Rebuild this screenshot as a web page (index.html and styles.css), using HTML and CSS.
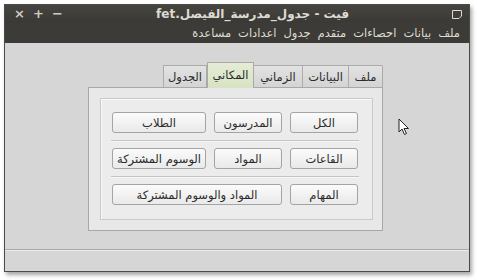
FILE: index.html
```html
<!DOCTYPE html>
<html lang="ar">

<head>
    <meta charset="UTF-8" />
    <title>fet</title>
    <link rel="stylesheet" href="styles.css">
</head>

<body>
    <div class="window">
        <div class="titlebar">
            <div class="win-buttons">
                <span class="wb">×</span>
                <span class="wb">+</span>
                <span class="wb">−</span>
            </div>
            <div class="title">فيت - جدول_مدرسة_الفيصل.fet</div>
            <svg class="menu-icon" width="10" height="9" viewBox="0 0 10 9">
                <path d="M0.5 0.5 H9.5 V6 L7 8.5 H0.5 Z" fill="none" stroke="#dfdbd2" stroke-width="1" />
            </svg>
        </div>
        <div class="menubar">
            <span>ملف</span>
            <span>بيانات</span>
            <span>احصاءات</span>
            <span>متقدم</span>
            <span>جدول</span>
            <span>اعدادات</span>
            <span>مساعدة</span>
        </div>

        <div class="content">
            <div class="tabwidget">
                <div class="tabbar">
                    <div class="tab t1">ملف</div>
                    <div class="tab t2">البيانات</div>
                    <div class="tab t3">الزماني</div>
                    <div class="tab t4 active">المكاني</div>
                    <div class="tab t5">الجدول</div>
                </div>
                <div class="pane">
                    <div class="frame">
                        <button class="btn">الكل</button>
                        <button class="btn">المدرسون</button>
                        <button class="btn">الطلاب</button>
                        <div class="sep"></div>
                        <button class="btn">القاعات</button>
                        <button class="btn">المواد</button>
                        <button class="btn">الوسوم المشتركة</button>
                        <div class="sep"></div>
                        <button class="btn">المهام</button>
                        <button class="btn wide">المواد والوسوم المشتركة</button>
                    </div>
                </div>
            </div>

            <!-- mouse pointer left in the shot -->
            <svg class="pointer" width="13" height="18" viewBox="0 0 13 18">
                <path d="M1 1 L1 14 L4 11 L6.5 16.5 L8.5 15.5 L6 10.5 L10.5 10.5 Z" fill="#fff" stroke="#222" stroke-width="1" stroke-linejoin="round" />
            </svg>
        </div>

        <div class="statusbar"></div>
    </div>
</body>

</html>
```

FILE: styles.css
```css
body {
    margin: 0;
    background: #ffffff;
    font-family: "DejaVu Sans", "Noto Sans", sans-serif;
    width: 477px;
    height: 280px;
    overflow: hidden;
}

.window {
    margin: 4px 0 0 4px;
    width: 464px;
    height: 266px;
    border: 1px solid #4a4a47;
    display: flex;
    flex-direction: column;
    background: #d6d6d6;
    box-shadow: 2px 3px 4px rgba(0, 0, 0, 0.35);
}

.titlebar {
    height: 18px;
    background: linear-gradient(#45443f, #3a3935);
    color: #dfdbd2;
    display: flex;
    align-items: center;
}

.win-buttons {
    display: flex;
    padding-left: 5px;
}

.wb {
    width: 19px;
    text-align: center;
    font-size: 13px;
    font-weight: bold;
    color: #cfcbc3;
    line-height: 18px;
}

.title {
    direction: rtl;
    font-size: 12px;
    font-weight: bold;
    margin-left: 107px;
    width: 175px;
    text-align: center;
    line-height: 18px;
    white-space: nowrap;
}

.menu-icon {
    margin-left: auto;
    margin-right: 7px;
}

.menubar {
    height: 20px;
    background: #3c3b37;
    color: #dfdbd2;
    direction: rtl;
    display: flex;
    align-items: center;
    gap: 7px;
    padding-right: 9px;
    font-size: 11.5px;
}

.content {
    flex: 1;
    position: relative;
    padding: 19px 0 0 83px;
    border-bottom: 1px solid #a9a9a9;
}

.tabwidget {
    width: 295px;
    display: flex;
    flex-direction: column;
}

.tabbar {
    direction: rtl;
    display: flex;
    align-items: flex-end;
    height: 25px;
    position: relative;
    z-index: 2;
}

.tab {
    height: 22px;
    box-sizing: border-box;
    border: 1px solid #ababab;
    border-bottom: none;
    border-left: none;
    background: linear-gradient(#e2e2e2, #d4d4d4);
    font-size: 11.5px;
    color: #2a2a2a;
    display: flex;
    align-items: center;
    justify-content: center;
    white-space: nowrap;
}

.t1 { width: 34px; border-top-right-radius: 2px; }
.t2 { width: 46px; }
.t3 { width: 49px; }
.t4 { width: 47px; }
.t5 { width: 44px; border-left: 1px solid #ababab; }

.tab.active {
    height: 26px;
    margin-bottom: -1px;
    background: linear-gradient(#e4ecd6, #d8e3c4);
    border: 1px solid #a9a9a9;
    border-bottom: none;
    padding-bottom: 1px;
}

.pane {
    height: 144px;
    box-sizing: border-box;
    border: 1px solid #a8a8a8;
    background: #e8e8e8;
    padding: 10px 9px 10px 11px;
    position: relative;
    z-index: 1;
}

.frame {
    height: 100%;
    box-sizing: border-box;
    border: 1px solid #cacaca;
    background: #ececec;
    box-shadow: inset 1px 1px 0 #f8f8f8;
    direction: rtl;
    padding: 13px 14px 0 13px;
    display: grid;
    grid-template-columns: 68px 68px 94px;
    column-gap: 8px;
    row-gap: 7px;
    align-content: start;
}

.btn {
    height: 21px;
    margin: 0;
    padding: 0;
    border: 1px solid #a4a4a4;
    border-radius: 3px;
    background: linear-gradient(#fbfbfb, #e9e9e9);
    font-family: "DejaVu Sans", sans-serif;
    font-size: 11.5px;
    color: #2a2a2a;
    white-space: nowrap;
}

.btn.wide {
    grid-column: span 2;
}

.sep {
    grid-column: 1 / -1;
    height: 1px;
    background: #c4c4c4;
    box-shadow: 0 1px 0 #f7f7f7;
    margin: 0 -1px;
}

.pointer {
    position: absolute;
    left: 393px;
    top: 75px;
}

.statusbar {
    height: 20px;
    background: #d6d6d6;
    border-top: 1px solid #eeeeee;
}
```
